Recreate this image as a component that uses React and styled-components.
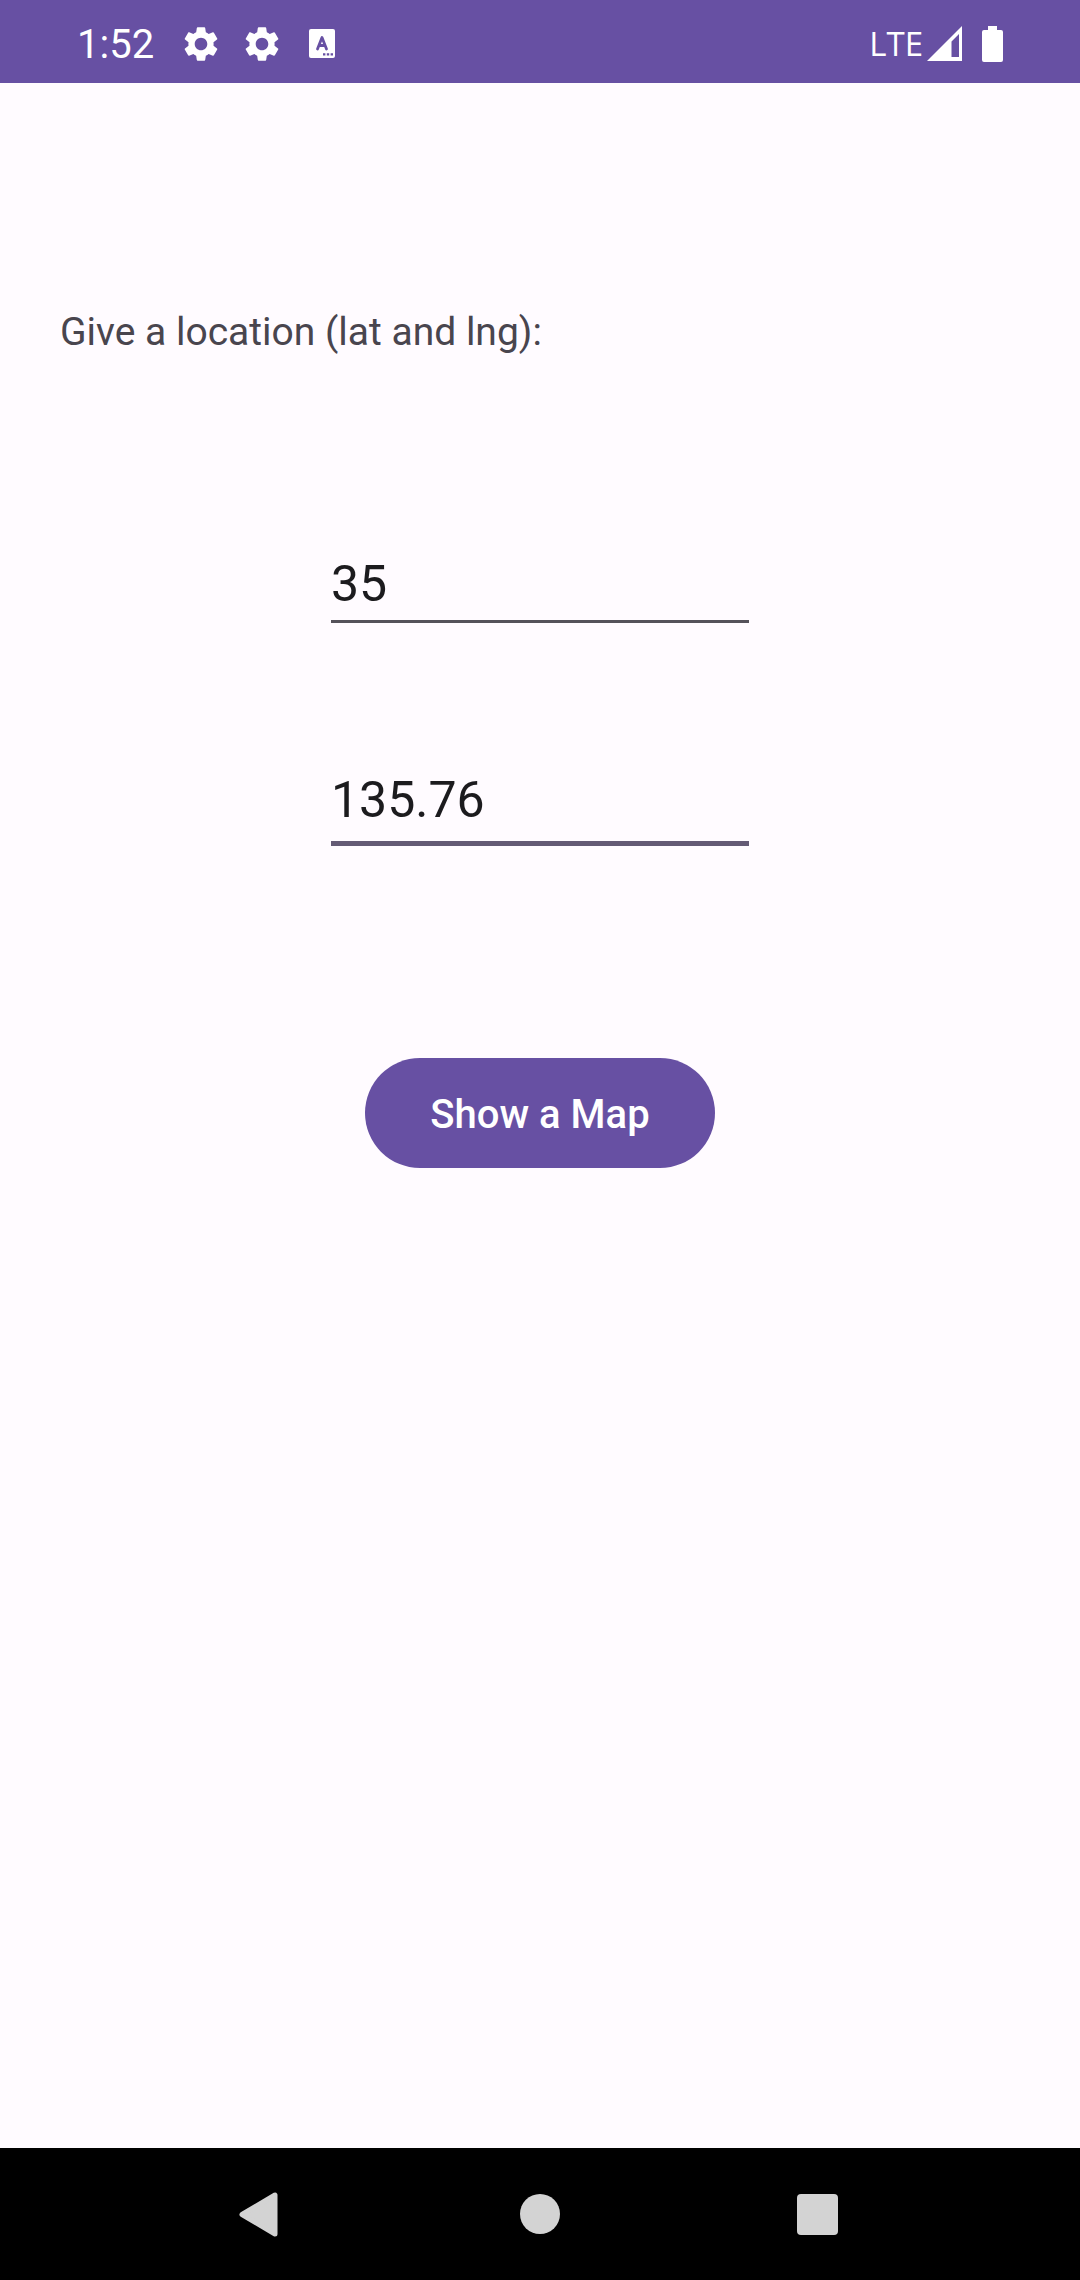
import React, { useState } from 'react';
import styled, { createGlobalStyle } from 'styled-components';
import { MdSettings } from 'react-icons/md';

const GlobalStyle = createGlobalStyle`
  * { box-sizing: border-box; }
  body {
    margin: 0;
    background: #fffbff;
    font-family: Roboto, "Noto Sans", sans-serif;
  }
`;

const Screen = styled.div`
  min-height: 100vh;
  display: flex;
  flex-direction: column;
`;

const StatusBar = styled.header`
  display: flex;
  align-items: center;
  justify-content: space-between;
  height: 83px;
  padding: 4px 77px 0;
  background: #6750a3;
  color: #fff;
`;

const StatusGroup = styled.div`
  display: flex;
  align-items: center;
  gap: ${({ $gap }) => $gap}px;

  svg { display: block; }
`;

const Clock = styled.time`
  padding-top: 2px;
  font-size: 40px;
  line-height: 48px;
`;

const Network = styled.span`
  font-family: "Liberation Sans Narrow", "Open Sans", sans-serif;
  font-size: 33px;
  line-height: 40px;
`;

const Main = styled.main`
  flex: 1;
  padding: 226px 60px 60px;
`;

const Form = styled.form`
  display: flex;
  flex-direction: column;
  align-items: center;
`;

const Prompt = styled.p`
  align-self: stretch;
  margin: 0 0 198px;
  color: #49454e;
  font-size: 39px;
  line-height: 46px;
`;

const Field = styled.input`
  width: 418px;
  max-width: 100%;
  margin: 0 0 ${({ $active }) => ($active ? 212 : 146)}px;
  padding: 0 0 ${({ $active }) => ($active ? 10 : 5)}px;
  border: 0;
  border-bottom: ${({ $active }) => ($active ? '5px solid #645a75' : '3px solid #55525a')};
  border-radius: 0;
  outline: 0;
  background: transparent;
  color: #1c1b1e;
  font-family: inherit;
  font-size: 50px;
  line-height: 60px;
  height: ${({ $active }) => ($active ? 77 : 70)}px;
`;

const MapButton = styled.button`
  min-width: 350px;
  height: 110px;
  padding: 4px 60px 0;
  border: 0;
  border-radius: 55px;
  background: #6750a3;
  color: #fff;
  font-family: inherit;
  font-size: 40px;
  font-weight: 500;
  line-height: 46px;
`;

const NavBar = styled.nav`
  display: flex;
  align-items: center;
  justify-content: center;
  gap: 138px;
  height: 132px;
  background: #000;
`;

const NavButton = styled.button`
  display: flex;
  align-items: center;
  justify-content: center;
  width: 140px;
  height: 100%;
  padding: 0;
  border: 0;
  background: transparent;
  color: #d3d3d3;
`;

const KeyboardIcon = () => (
  <svg width="26" height="29" viewBox="0 0 26 29" aria-hidden="true">
    <rect width="26" height="29" rx="2" fill="#fff" />
    <path d="M8.5 20 13 8.5 17.5 20M10.2 16.5h5.6" fill="none" stroke="#6750a3" strokeWidth="2.8" strokeLinecap="round" strokeLinejoin="round" />
    <path d="M14 24.2h2.4v2.2H14zM17.8 24.2h2.4v2.2h-2.4zM21.6 24.2H24v2.2h-2.4z" fill="#6750a3" />
  </svg>
);

const SignalIcon = () => (
  <svg width="35" height="35" viewBox="0 0 35 35" aria-hidden="true">
    <path fillRule="evenodd" d="M0 35 35 0v35zM24.5 15.5V31H32V8z" fill="#fff" />
  </svg>
);

const BatteryIcon = () => (
  <svg width="21" height="36" viewBox="0 0 21 36" aria-hidden="true">
    <path d="M6 0h9v4h4a2 2 0 0 1 2 2v28a2 2 0 0 1-2 2H2a2 2 0 0 1-2-2V6a2 2 0 0 1 2-2h4z" fill="#fff" />
  </svg>
);

const BackIcon = () => (
  <svg width="48" height="48" viewBox="0 0 48 48" aria-hidden="true">
    <path d="M4 24.5 37 5v39z" fill="currentColor" stroke="currentColor" strokeWidth="5" strokeLinejoin="round" />
  </svg>
);

const HomeIcon = () => (
  <svg width="48" height="48" viewBox="0 0 48 48" aria-hidden="true">
    <circle cx="24" cy="24" r="20" fill="currentColor" />
  </svg>
);

const RecentsIcon = () => (
  <svg width="48" height="48" viewBox="0 0 48 48" aria-hidden="true">
    <rect x="3" y="4" width="41" height="41" rx="4" fill="currentColor" />
  </svg>
);

export default function App() {
  const [lat, setLat] = useState('35');
  const [lng, setLng] = useState('135.76');

  return (
    <>
      <GlobalStyle />
      <Screen>
        <StatusBar>
          <StatusGroup $gap={26}>
            <Clock>1:52</Clock>
            <StatusGroup $gap={19}>
              <MdSettings size={42} />
              <MdSettings size={42} />
            </StatusGroup>
            <KeyboardIcon />
          </StatusGroup>
          <StatusGroup $gap={20}>
            <StatusGroup $gap={4}>
              <Network>LTE</Network>
              <SignalIcon />
            </StatusGroup>
            <BatteryIcon />
          </StatusGroup>
        </StatusBar>
        <Main>
          <Form onSubmit={(event) => event.preventDefault()}>
            <Prompt>Give a location (lat and lng):</Prompt>
            <Field
              aria-label="Latitude"
              inputMode="decimal"
              value={lat}
              onChange={(event) => setLat(event.target.value)}
            />
            <Field
              $active
              aria-label="Longitude"
              inputMode="decimal"
              value={lng}
              onChange={(event) => setLng(event.target.value)}
            />
            <MapButton type="submit">Show a Map</MapButton>
          </Form>
        </Main>
        <NavBar aria-label="System">
          <NavButton type="button" aria-label="Back"><BackIcon /></NavButton>
          <NavButton type="button" aria-label="Home"><HomeIcon /></NavButton>
          <NavButton type="button" aria-label="Recent apps"><RecentsIcon /></NavButton>
        </NavBar>
      </Screen>
    </>
  );
}
